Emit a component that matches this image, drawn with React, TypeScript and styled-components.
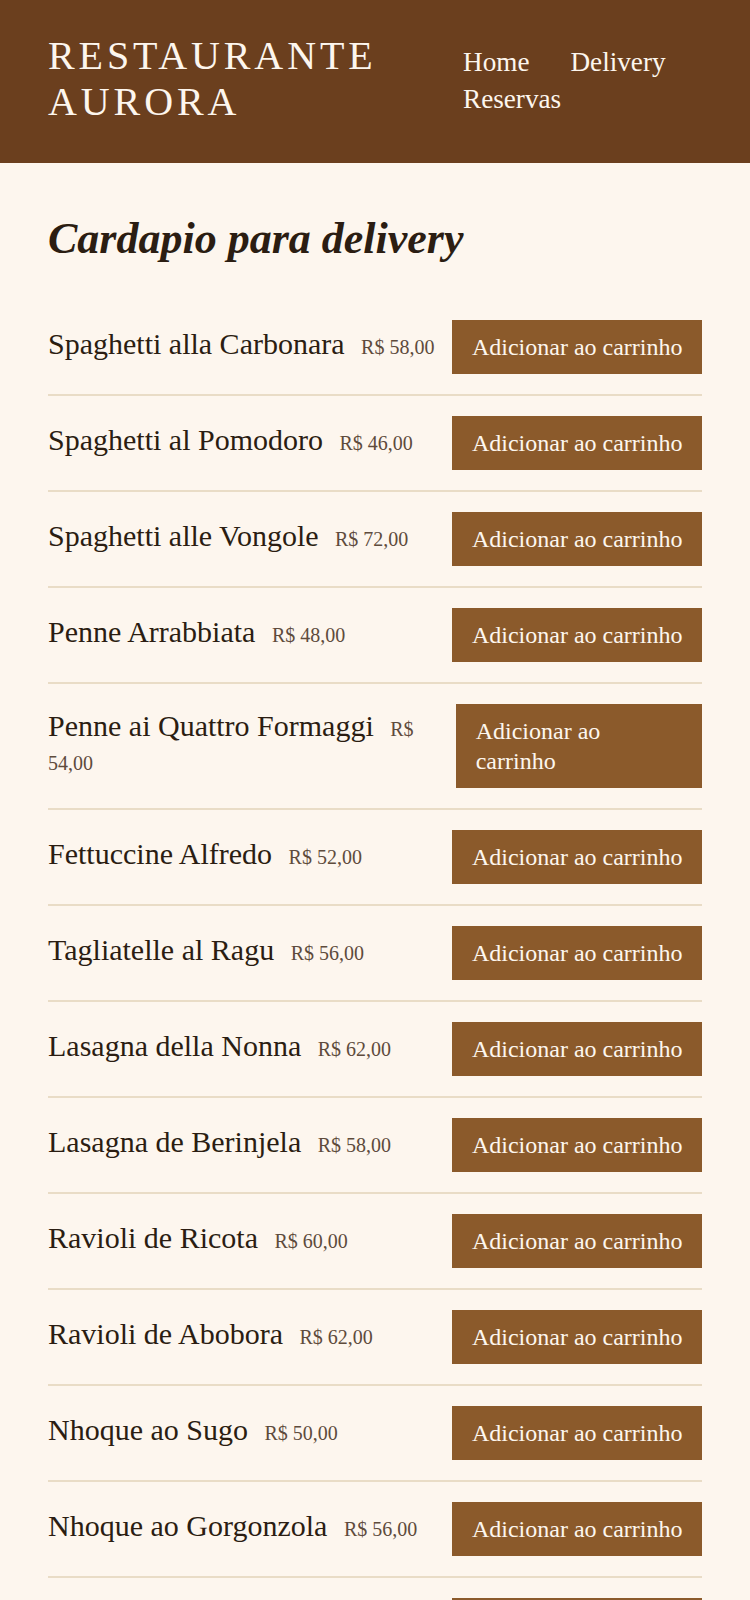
import React from 'react';
import styled, { createGlobalStyle } from 'styled-components';

interface MenuItem {
    name: string
    price: string
}

const items: MenuItem[] = [
    { name: 'Spaghetti alla Carbonara', price: 'R$ 58,00' },
    { name: 'Spaghetti al Pomodoro', price: 'R$ 46,00' },
    { name: 'Spaghetti alle Vongole', price: 'R$ 72,00' },
    { name: 'Penne Arrabbiata', price: 'R$ 48,00' },
    { name: 'Penne ai Quattro Formaggi', price: 'R$ 54,00' },
    { name: 'Fettuccine Alfredo', price: 'R$ 52,00' },
    { name: 'Tagliatelle al Ragu', price: 'R$ 56,00' },
    { name: 'Lasagna della Nonna', price: 'R$ 62,00' },
    { name: 'Lasagna de Berinjela', price: 'R$ 58,00' },
    { name: 'Ravioli de Ricota', price: 'R$ 60,00' },
    { name: 'Ravioli de Abobora', price: 'R$ 62,00' },
    { name: 'Nhoque ao Sugo', price: 'R$ 50,00' },
    { name: 'Nhoque ao Gorgonzola', price: 'R$ 56,00' },
    { name: 'Risoto de Funghi', price: 'R$ 64,00' },
    { name: 'Risoto de Camarao', price: 'R$ 78,00' },
];

const App: React.FC = () => {
    return (
        <>
            <GlobalStyle />
            <Header>
                <Brand>RESTAURANTE AURORA</Brand>
                <Nav>
                    <NavLink href="#">Home</NavLink>
                    <NavLink href="#">Delivery</NavLink>
                    <NavLink href="#">Reservas</NavLink>
                </Nav>
            </Header>
            <Main>
                <Title>Cardapio para delivery</Title>
                <List>
                    {items.map((item) => (
                        <Row key={item.name}>
                            <ItemText>
                                <span>{item.name}</span>{' '}
                                <Price>{item.price}</Price>
                            </ItemText>
                            <AddButton>Adicionar ao carrinho</AddButton>
                        </Row>
                    ))}
                </List>
            </Main>
        </>
    );
};

export default App;

const GlobalStyle = createGlobalStyle`
    body {
        margin: 0;
        background-color: #fdf6ee;
        font-family: "Liberation Serif", "Times New Roman", serif;
        color: #2b1d12;
    }
`
const Header = styled.header`
    display: flex;
    justify-content: space-between;
    align-items: flex-start;
    gap: 24px;
    padding: 33px 48px 38px;
    background-color: #6b3f1e;
    color: #fdf6ee;
`
const Brand = styled.div`
    flex: 1;
    font-size: 40px;
    line-height: 46px;
    letter-spacing: 3.9px;
`
const Nav = styled.nav`
    flex: 0 0 239px;
    display: flex;
    flex-wrap: wrap;
    column-gap: 41px;
    row-gap: 6px;
    margin-top: 14px;
`
const NavLink = styled.a`
    color: #fdf6ee;
    text-decoration: none;
    font-size: 27.2px;
`
const Main = styled.main`
    padding: 48px 48px;
`
const Title = styled.h1`
    margin: 2px 0 36px;
    font-size: 44px;
    font-weight: bold;
    font-style: italic;
    color: #2b1d12;
`
const List = styled.ul`
    list-style: none;
    margin: 0;
    padding: 0;
`
const Row = styled.li`
    display: flex;
    justify-content: space-between;
    align-items: center;
    padding: 20px 0;
    border-bottom: 2px solid #e9dcc6;
`
const ItemText = styled.div`
    font-size: 30px;
    padding-bottom: 6px;
    color: #2b1d12;
`
const Price = styled.span`
    margin-left: 9px;
    font-size: 20px;
    color: #5e4b3c;
`
const AddButton = styled.button`
    padding: 12px 19.5px;
    border: none;
    background-color: #8b5a2b;
    color: #fdf6ee;
    font-family: inherit;
    font-size: 24px;
    line-height: 1.25;
    text-align: left;
    cursor: pointer;
`
